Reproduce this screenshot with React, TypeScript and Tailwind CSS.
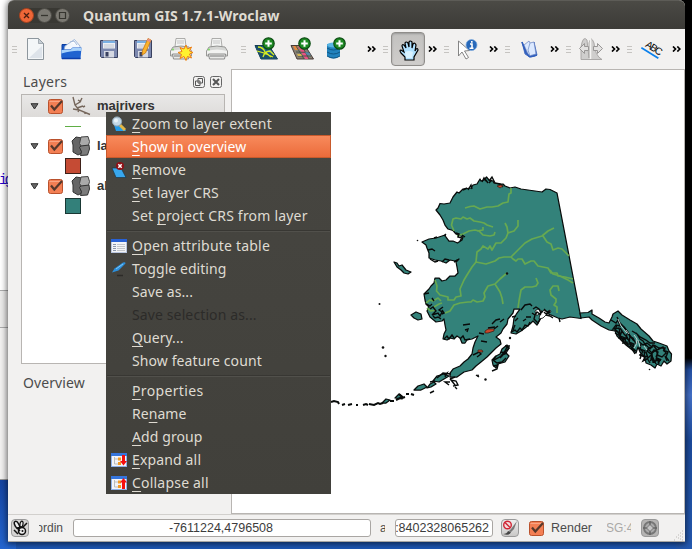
import type { ReactNode } from 'react';

const UI = "font-['Noto_Sans','Open_Sans',sans-serif]";
const SANS = "font-['Liberation_Sans',Arial,sans-serif]";

function Svg({ children, size = 24, className = '' }: { children: ReactNode; size?: number; className?: string }) {
  return (
    <svg viewBox={`0 0 ${size} ${size}`} width={size} height={size} className={`block shrink-0 ${className}`}>
      {children}
    </svg>
  );
}

function Handle({ className }: { className: string }) {
  return (
    <div className={`flex w-[5px] shrink-0 flex-col gap-[2px] ${className}`}>
      <i className="h-px bg-[#c6c4c1]" />
      <i className="h-px bg-[#c6c4c1]" />
      <i className="h-px bg-[#c6c4c1]" />
    </div>
  );
}

function More({ className }: { className: string }) {
  return (
    <svg viewBox="0 0 10 6" width="10" height="6" className={`block shrink-0 ${className}`}>
      <path d="M1 .5 3.5 3 1 5.5M5.3 .5 7.8 3 5.3 5.5" fill="none" stroke="#000" strokeWidth="1.7" />
    </svg>
  );
}

function Floppy() {
  return (
    <>
      <path d="M3.5 3.5h17v17h-16l-1-1z" fill="#7c88ae" stroke="#39405f" />
      <path d="M6 3.5h12v8H6z" fill="#eceef4" />
      <path d="M6 5h12" stroke="#5ea0e0" strokeWidth="1.6" />
      <path d="M7 8h10M7 10h10" stroke="#b9bdc9" strokeWidth=".8" />
      <path d="M7 14h10v6.5H7z" fill="#d5d8e2" />
      <path d="M8.500 15h3v4.500h-3z" fill="#39405f" />
    </>
  );
}

function Printer() {
  return (
    <>
      <path d="M7 1.500h9l1 8H6z" fill="#f3f4f3" stroke="#9a9a98" strokeWidth=".8" />
      <path d="M8 4h7M8 6h7" stroke="#c5c5c5" />
      <path d="M4 10q8-2 16 0l2.500 4v5h-21v-5z" fill="#d5d6d4" stroke="#858583" strokeWidth=".8" />
      <path d="M2 14q10-3 20 0v3H2z" fill="#f2f2f1" />
      <path d="M3.500 17h17l-1 5h-15z" fill="#e9e9e8" stroke="#777" strokeWidth=".8" />
      <path d="M5 19h14" stroke="#777" />
      <circle cx="4" cy="12.500" r="1" fill="#7fdc63" />
    </>
  );
}

function Plus() {
  return (
    <>
      <circle cx="14.500" cy="6.500" r="5.700" fill="#1f8a24" stroke="#0d4d14" strokeWidth="1.200" />
      <path d="M14.500 3.200v6.600M11.200 6.500h6.600" stroke="#fff" strokeWidth="2" />
    </>
  );
}

function Check() {
  return (
    <Svg size={17}>
      <rect x="1.500" y="1.500" width="14" height="14" rx="2" fill="#f37f54" stroke="#b9512c" />
      <path d="M2.500 3.500h12" stroke="#faa584" />
      <path d="M4 7.500 7.300 11.500 15 3" fill="none" stroke="#57382b" strokeWidth="2.200" />
    </Svg>
  );
}

function Toolbar() {
  return (
    <div className="flex h-10 shrink-0 items-center bg-[#f2f1f0]">
      <Handle className="ml-1" />
      <Svg className="ml-[7px]">
        <path d="M3.500 1.500h11l5 5v16h-16z" fill="#f3f6f8" stroke="#8d969d" />
        <path d="M14.500 1.500v5h5z" fill="#c6ced5" stroke="#8d969d" strokeWidth=".7" />
        <path d="M5 21h13V9z" fill="#dde3ea" />
      </Svg>
      <Svg className="ml-3">
        <path d="M2 7.500h5l1 1h11v12H2z" fill="#1a57c5" stroke="#0c3ea0" />
        <path d="M5 9 14.500 2.500 20 9v4H4z" fill="#f2f7fd" stroke="#8fa9d0" strokeWidth=".8" />
        <path d="m10 5 4-1 3 4" fill="#fff" stroke="#8fa9d0" strokeWidth=".8" />
        <path d="M1.500 12.500h9l2-2h9l-1 11.500h-19z" fill="#2063d0" />
        <path d="M1.500 13h9l2-2h9l-.3 3Q14 13 1.500 16.500z" fill="#a9d3fb" />
        <path d="M2 21.500h18.500" stroke="#0c3eab" strokeWidth="1.500" />
      </Svg>
      <Svg className="ml-[13px]"><Floppy /></Svg>
      <Svg className="ml-3">
        <g transform="translate(-2 0)"><Floppy /></g>
        <path d="m15 1.500 3 1.500-5.500 13-3.500 2 .5-4.500z" fill="#fbb32c" stroke="#c77a12" strokeWidth=".8" />
        <path d="m15 1.500 3 1.500-1 2.200-3.200-1.500z" fill="#e98f80" />
      </Svg>
      <Svg className="ml-3">
        <Printer />
        <path d="m17 8 1.500 4 4-2-2 4 3.500 1.500-3.500 1.500 2 4-4-1.500-1.500 4-2-4-4 2 1.500-4-3.500-2 4-1-2-4 4 1.500z" fill="#fff12e" stroke="#ee7c13" />
      </Svg>
      <Svg className="ml-3"><Printer /></Svg>
      <Handle className="ml-3" />
      <Svg className="ml-2">
        <path d="M1 8.500h14L23.500 22H7z" fill="#20639a" stroke="#173c54" />
        <path d="m1 9 6 13h16l-3-5q-9 1-12-8z" fill="#1b4f6b" />
        <path d="M4 10q5 0 7 5l6 5M9 20q2-6 7-6l4 4M3 14l7 2 9 4" fill="none" stroke="#d8ed22" strokeWidth="1.300" />
        <Plus />
      </Svg>
      <Svg className="ml-3">
        <path d="M1 8.500h14L23.500 22H7z" fill="#888073" stroke="#493b37" />
        <path d="M3 9h4l2 4H5z" fill="#e6893e" /><path d="m8 9h4l7 13h-4z" fill="#e95183" />
        <path d="m6 15 13 .500M8 19h13M6 9l8 13M12 9l7 13" stroke="#3e5148" strokeWidth=".9" />
        <path d="m15 15 4 .500 2 3-4-.500z" fill="#538aab" /><path d="m7 17h4l1 2H8z" fill="#d5b64f" />
        <Plus />
      </Svg>
      <Svg className="ml-[11px]">
        <path d="M2 7v12q6.500 5 13 0V7z" fill="#2182bd" />
        <path d="M2 11q6.500 4 13 0M2 15q6.500 4 13 0M2 19q6.500 4 13 0" fill="none" stroke="#0f5785" />
        <ellipse cx="8.500" cy="8" rx="6.500" ry="2.500" fill="#5ab5e3" />
        <Plus />
      </Svg>
      <More className="ml-[18px]" />
      <Handle className="ml-[6px]" />
      <div className="ml-[3px] flex size-[34px] shrink-0 items-center justify-center rounded-[4px] border border-[#8f8d8a] bg-gradient-to-b from-[#c2c1bf] to-[#cfcdcb] shadow-[inset_0_1px_2px_#999]">
        <Svg className="ml-[2px] mt-[3px]">
          <path d="M8 21v-3l-4-4q-2-3 0-3l3 2-2-6q0-2 2-1l2 3-1-5q1-2 3 0l1 4V3q1-2 3 0v6l1-4q2-2 3 1l-1 6 1-2q2-1 2 1l-4 7v3z" fill="#b0e1ff" stroke="#000" strokeWidth="1.200" />
          <path d="M8 13q4-2 8 0l-1 6H9z" fill="#d9f2ff" />
        </Svg>
      </div>
      <More className="ml-[3px]" />
      <Handle className="ml-[6px]" />
      <Svg className="ml-[7px]">
        <path d="M2.500 4v15l3.500-4 4 7 2.500-1.500-4-6.500 5-.500z" fill="#fff" stroke="#777" strokeWidth=".9" />
        <circle cx="15.500" cy="8" r="5.500" fill="#2869ba" stroke="#7ba9dd" strokeWidth=".7" />
        <path d="M14 7h2v4M13.500 11.300h4M15.800 4v1.800" fill="none" stroke="#fff" strokeWidth="1.600" />
      </Svg>
      <More className="ml-[9px]" />
      <Handle className="ml-[6px]" />
      <Svg className="ml-2">
        <path d="m4 5 3 12q6 5 12 1L16 5l1 11-6 4z" fill="#6e91d8" stroke="#345eb5" strokeWidth=".8" />
        <path d="m6 8 5-4 1 2 4-1 2 12-7 2z" fill="#dce9ff" stroke="#6480c0" strokeWidth=".7" />
        <path d="m12 6-2 7 2 6" fill="none" stroke="#8ba5d5" /><path d="m4 5 4 11 4 4 7-2" fill="none" stroke="#315fbd" strokeWidth="1.500" />
      </Svg>
      <More className="ml-2" />
      <Handle className="ml-[6px]" />
      <Svg className="ml-2">
        <path d="M2 22.500V10Q4-2 8 3l2 18V6q2-8 5 0 1 13 8 16.500z" fill="#cfcecd" stroke="#a5a3a2" strokeWidth=".9" />
        <path d="m.5 11.500 5-5v3h4v4h-4v3zm23 0-5-5v3h-4v4h4v3z" fill="#e3e2e1" stroke="#999796" />
        <path d="M11.500 2v20" stroke="#f5f4f3" strokeWidth="1.500" />
      </Svg>
      <More className="ml-2" />
      <Handle className="ml-[6px]" />
      <Svg className="ml-[9px]">
        <g transform="rotate(32 2 10)">
          <text x="3" y="8.500" fontFamily="Liberation Sans" fontSize="10" fill="#000" textLength="18">ABC</text>
          <path d="M1 11.500h20" stroke="#0b80ec" strokeWidth="1.800" />
        </g>
      </Svg>
      <More className="ml-[7px]" />
    </div>
  );
}

function Polygons() {
  return (
    <Svg size={20}>
      <path d="m1 5 4-4 6 1 1 5-3 4 2 6-4 2-5-3V9z" fill="#666" stroke="#333" />
      <path d="m10 1 7-.500 1.500 5-1 4-7 1-2-3z" fill="#aaa" stroke="#444" />
      <path d="m10 10 8-1 .500 4-2 6-7 .500 1-4-2-4z" fill="#7c7c7c" stroke="#333" />
    </Svg>
  );
}

function LayerRow({ name, icon, className = '' }: { name: string; icon: ReactNode; className?: string }) {
  return (
    <div className={`flex items-center pl-[8px] ${className}`}>
      <svg width="9" height="7" viewBox="0 0 9 7" className="mr-[8px] block"><path d="M1 .700h7L4.500 6z" fill="#666" stroke="#333" /></svg>
      <Check />
      <span className="ml-[7px] mr-[6px]">{icon}</span>
      <span className="text-[13px] font-bold leading-5 text-[#333]">{name}</span>
    </div>
  );
}

function LayersDock() {
  return (
    <div className="flex w-[223px] shrink-0 flex-col">
      <div className="flex h-[25px] items-center pl-[15px] pr-[9px]">
        <span className={`flex-1 text-[14px] tracking-[.25px] text-[#4c4c4c] ${UI}`}>Layers</span>
        <Svg size={12} className="mr-[5px]">
          <rect x=".5" y=".5" width="11" height="11" rx="2" fill="none" stroke="#666" />
          <path d="M5 2.500h4.500V7H5zM2.500 5H7v4.500H2.500z" fill="#f2f1f0" stroke="#555" />
        </Svg>
        <Svg size={12}>
          <rect x=".5" y=".5" width="11" height="11" rx="2" fill="none" stroke="#666" />
          <path d="m3 3 6 6M9 3 3 9" stroke="#555" strokeWidth="2" />
        </Svg>
      </div>
      <div className={`ml-[13px] flex h-[270px] w-[204px] flex-col border border-[#b8b5b2] bg-white ${SANS}`}>
        <LayerRow
          name="majrivers"
          className="h-[22px] bg-gradient-to-b from-[#e9e8e7] to-[#dddbd9]"
          icon={
            <Svg size={20}>
              <path d="m2 1 2 8 4 5 11 4.500M2 13l6 1M4 9l5-3 2-4M6 12l6-2M8 14l-1 2M10 6l-3-2M12 11l2-1M14 16v2" fill="none" stroke="#75665b" strokeWidth="1.400" />
            </Svg>
          }
        />
        <div className="flex h-[18px] pl-[43px] pt-[9px]"><i className="h-px w-4 bg-[#5fae45]" /></div>
        <LayerRow name="lakes" className="h-[22px]" icon={<Polygons />} />
        <div className="flex h-[18px] pl-[43px] pt-px"><i className="size-4 border border-[#3e2119] bg-[#c54b34]" /></div>
        <LayerRow name="alaska" className="h-[22px]" icon={<Polygons />} />
        <div className="flex h-[18px] pl-[43px] pt-px"><i className="size-4 border border-[#193834] bg-[#33807a]" /></div>
      </div>
      <div className={`mt-[9px] pl-[15px] text-[14px] leading-5 tracking-[.1px] text-[#4c4c4c] ${UI}`}>Overview</div>
    </div>
  );
}

const MAINLAND =
  'M486.500 177L484 180 481 181 480 179 477 184 473 185 471 188 463 189 459 193 457 192 453 197 450 203 444 204 440 203.500 438 208 436 210 440 215 443 220 445 225 448 229 453 230.500 456 234 463 237 462 240 457.500 243 453 241 449 241 446 237 445 235 436 238 429 239 422 242 426 245 427 248 429 253 429 258 435 260 441 261 446 263 450 260 455 261 459 259 456 262 457 267 458 273 455 276 450 276 446 280 442 281 439 278 435 278 434 283 431 286 429 289 424 294 425 300 426 304 429 307 427 311 430 317 436 322 442 321 444 319 445 325 446 330 444 334 443 339 447 340 450 338 454 339 457 336 460 338 462 343 465 343 467 340 472 339 478 336 475 342 473 348 472 354 468 359 464 362 460 366 453 369 450 373 450 377 457 377 464 372 472 370 476 366 481 362 487 357 496 348 501 344 500 340 496 337 501 333 503 329 507 324 508 319 513 313 514 309 520 309 517 313 514 318 513 326 511 333 516 334 521 331 525 328 530 324 533 321 537 325 541 318 546 313 551 315 558 318 562 319 570 317 581 318.500 580 313 557 193 550 189.500 546 189 542 192 535 191 528 190 521 189 515 187 510 188 505 186 503 184 499 184 494 183 493 181 489 180z';

const PANHANDLE =
  'M580 313L588 312.500 592 310 592 314 599 318 605 322 609 323 612 317 613 314 618 311 622 315 630 320 637 324 641 329 649 336 653 341 659 343 667 346 669 351 671.500 354 671 361 667 364 664 361 661 366 657 364 655 368 651 365 646 363 645 358 640 352 638 347 636 353 631 349 626 345 621 340 617 336 615 331 609 330 601 326 592 320 589 317 581 318z';

const RIVERS = [
  'M465 208L470 206.500 474 206 480 209 487 207 492 207 498 206 503 203 508 202 509 194 511 193 511 188',
  'M454 231L451.500 225 453 219 456 218 461 219 463 217 467 219 470 218 474 221 480 222 484 223 487 225 493 227',
  'M457 236L463 234 469 231 475 230 479 231 483 235 490 236 494 235 495 232M477 231L483 230 483 227',
  'M435 280L437 286 436.500 291 440 295 448 297 448 300 454 300 456 297 461 296 460 289 464 280 467 275 472 267 476 262 486 264 495 261 499 258 504 257 511 257 516 252 519 249 525 243 532 239 542 236 548 231 554 228M543 236L547 242 551 244 553 250 558 248 562 249 566 253 569 256',
  'M476 262L477 252 481 249 483 246 488 249 490 246 492 250 496 243 501 243 506 238 508 233 514 231 518 226 518 220M508 233L507 227 505 223',
  'M511 257L513 259 516 261 518 259 522 259 525 264 531 261 534 261 538 266 543 267 548 268 551 273 557 273 558 276 565 277 573 279',
  'M445 313L450 311 454 305 460 303 468 302 471 302 473 300 477 302 483 301 485 297 484 293 488 286 495 284 500 279 507 273M495 284L500 292 502 298 503 304',
  'M518 308L519 301 521 290 525 287 532 287 536 286 538 283 536 278',
  'M426 303L430 300 433 301 438 298 441 301',
  'M559 291L558 286 553 286 550 290 551 295 556 299 556 302 554 305 557 307 557 313',
  'M550 270L553 274 560 276 564 278 568 280 573 283',
  'M434 307L439 304 442 303M427 308L431 311 436 310',
];

// Channel, fjord and islet shorelines, grouped by stretch of coast.
const SHORES = [
  'M426 304l4 2 2-2M430 309l3-2 3 4-4 4 6-2 2 3 2-4-3-2 4-3M433 316l2 2 3-1 3 2M442 310l2 3-2 1M432 298l2 3M424 294l5-1',
  'M428 250l4-1 3 2M430 259l5 3 3-1M442 262l3-3 4 1M454 262l4-2M456 233l3 1-1 3 4 1-2 3M462 235l3 2M434 238l3-1M444 236l2-2',
  'M463 190l4-2M468 190l3-5 1 4M482 182l2-4 2 3M485 179l3 4M489 181l3-4 3 6 5 1 3 3M489 183l3-3',
  'M463 325l7-1M465 330l3-1-1 3M492 324l4-4 4-1M481 341l6 1M494 329l4-3M473 355l6-3 2 2-4 3',
  'M444 339l3-3 2 3 3-4 2 3M460 339l3-3 2 4 5-1M484 334l-5-1M488 328l7-1M500 322l4-3',
  'M511 332l4-2 2 2 3-4 2 2 3-5 3 1 2-4M512 317l4-1M515 321l3-3M523 321l3-2M526 317l5 0M513 330l2-5',
  'M521 310l4-5 5-1 2 2M533 309l3-2 3 2 2 4M532 313l3 2 2-3 4 3M535 315l-1 4 4 4 2-4M544 309l3 3 3-1M544 312l2 2 4-2M546 315l4 1 3 2M559 318l1 4M537 312l3 2 3-3',
  'M494 360l4-2 3-2 4-5 2-4 2 1-3 5M493 366l5-1-1 4-5 2M502 355l5-2M501 352l4 1-5 5M496 356l-3 4 4 3 5-1 4-4M505 346l5 0',
  'M450 379l5-2M455 385l-4-5 5 1 2 4-5 1M449 385l-4-3 5 0M457 389l-2-2M444 375l3-2-2 4M430 393l4-2M476 375l3 2M430 382l5-1M437 378l6-5 8 1',
  'M611 320l5 3 2-3 2 6-4-1-3 4 6-1 1 5-5-3M617 317l3 6 4 4 4 6 6 8',
  'M616 330l4 5-1 3 5 1-1 4 4-1 1 4 4 1 2 4M620 328l4 6 3 3 3 6 4 4M624 327l4 5 2 5 3 1 3 6M615 333l5 3 3 5 5 3M617 325l-2 5 5 4M622 331l-2 5 5 2 1 6 4 0 2 5M627 334l-1 4 4 3M630 337l-1 5 5 2-2 4 4 3',
  'M632 331l5 3 3 5 3 2 3 5M639 348l4 4-3 3 5 2-2 4 4-2M638 341l5 4 4-2 5 4-4 2 4 4 4-3 2 5M636 333l4 4 6 3 4 3 5 0',
  'M645 344l5 5 3-4 4 5 6-3 3 6-4 4-5-2-1 5 5 0M646 352l2 6 4-4 1 8 5-2 1 4M650 361l3-3 3 6M663 350l5 2-2 5 3 4M654 345l5 3 6 0-1 4M650 347l-3 4 4 3 3-4 4 2-2 5M641 344l-1 5 5 2-1 5 4 1M652 354l-1 5 4 3 2-4 4 2',
  'M640 359l1-3M635 354l-3-5 3 1M641 357l-1-3M658 363l3-4M665 356l2 5M647 358l3 5',
];

const INLETS = [
  'M540 314l4-4 3 2 3-2 1 2-4 2-4 4-4 1z',
  'M535 311l3-2 4 2-4 4-2 0z',
];

function AlaskaMap() {
  return (
    <svg viewBox="232 70 452 444" width="452" height="444" className="block">
      <g stroke="#080b0a" strokeWidth="1.250" strokeLinejoin="round" fill="#33827a">
        <path d={MAINLAND} />
        <path d={PANHANDLE} />
        <path d="M411 315L416 312 421 314 422 319 418 320 414 318z" />
        <path d="M394 262L397 263 399 266 402 265 406 270 411 272 408 274 404 273 401 270 397 267z" />
        <path d="M492 360L496 356 500 354 502 349 507 345 509 348 505 352 509 356 505 362 498 364 496 368 493 365z" />
        <path d="M433 381L437 376 444 374 449 376 444 379 439 382z" />
        <path d="M414 390L418 386 424 384 427 387 421 390z" />
        <path d="M427 388L430 384 434 382 436 384 431 387z" />
        <path d="M395 398L399 394 402 396 402 399zM382 403L386 399 390 400 386 403z" />
      </g>
      <g fill="none" stroke="#67a951" strokeWidth="1.700" strokeLinejoin="round">
        {RIVERS.map((d) => <path key={d} d={d} />)}
      </g>
      <g fill="#fff" stroke="#080b0a" strokeWidth=".8">
        {INLETS.map((d) => <path key={d} d={d} />)}
      </g>
      <g fill="none" stroke="#080b0a" strokeWidth="1.400">
        {SHORES.map((d) => <path key={d} d={d} />)}
        <path d="M402 398l3-1M406 394l3 0M411 394l3 1M390 401l4 0M396 400l6-3M399 394l4 4M363 405l3-1 2 1M369 404l5 1 4-2 2 1 3-1M356 405l2 0M348 405l4-1M342 405l3-1M331 402l3-1 4 1 1 2" strokeWidth="2" />
      </g>
      <path d="M618 319l3 7 6 7M634 335l3 4-1 6-2 3M638 340l2 7M644 346l3 4M626 330l3 4" fill="none" stroke="#dfe8e7" strokeWidth=".8" />
      <g fill="#c8472b" stroke="#351a12" strokeWidth=".7">
        <path d="M485 331l3-2 6 0 0 2-6 2-3 0z" /><path d="M478 350l4 0 1 2-5 0z" /><path d="M497 186l4-1 2 1-3 2z" />
      </g>
      <g fill="#111">
        <circle cx="507" cy="273.500" r="1.200" /><circle cx="379.500" cy="304" r="1" /><circle cx="383" cy="347.500" r="1.300" />
        <circle cx="385.500" cy="356" r="1.200" /><circle cx="417.500" cy="240.500" r=".8" /><circle cx="478" cy="375.500" r="1" /><circle cx="485.500" cy="379.500" r="1.200" />
        <circle cx="649.500" cy="369.500" r=".8" /><circle cx="510" cy="338" r="1.200" />
      </g>
    </svg>
  );
}

function StatusBar() {
  return (
    <div className={`flex h-[27px] shrink-0 items-center border-t border-[#d2d0cd] bg-[#f2f1f0] text-[12px] text-[#4c4c4c] ${SANS}`}>
      <div className="ml-[3px] flex size-[18px] shrink-0 items-center justify-center rounded-[4px] border border-[#999] bg-[#d5d4d3]">
        <Svg size={16}>
          <ellipse cx="5" cy="5" rx="2" ry="4" transform="rotate(-30 5 5)" fill="#eee" stroke="#111" strokeWidth="1.500" />
          <ellipse cx="9.500" cy="4" rx="1.500" ry="3" transform="rotate(10 9 4)" fill="#eee" stroke="#111" strokeWidth="1.200" />
          <circle cx="10" cy="11" r="3.500" fill="#eee" stroke="#111" strokeWidth="1.500" />
          <path d="m5 8 6-1 4-4M2 10l4 4M6 9l2 2" fill="none" stroke="#111" strokeWidth="1.500" />
          <circle cx="10.500" cy="11" r="1" fill="#111" />
        </Svg>
      </div>
      <div className="ml-[10px] flex w-[24px] justify-end overflow-hidden text-[12px]"><span>ordin</span></div>
      <div className="ml-[10px] flex h-[18px] w-[298px] shrink-0 items-center justify-center rounded-[3px] border border-[#a9a6a3] bg-white pr-[2px] text-[12.500px] text-[#3c3c3c]">
        -7611224,4796508
      </div>
      <span className="ml-[9px] w-[5px] overflow-hidden">a</span>
      <div className="ml-[10px] flex h-[18px] w-[98px] shrink-0 items-center justify-end overflow-hidden rounded-[3px] border border-[#a9a6a3] bg-white pr-[3px] text-[12.500px] text-[#3c3c3c]">
        <span>:8402328065262</span>
      </div>
      <div className="ml-[8px] flex size-[18px] shrink-0 items-center justify-center rounded-[4px] border border-[#999] bg-gradient-to-b from-[#eee] to-[#c9c8c7]">
        <Svg size={16}>
          <path d="m15 1-6 8-2 2 2 1 3-3z" fill="#777" />
          <path d="M1 14q4 0 5-3l3 1q-1 4-8 2z" fill="#444" />
          <circle cx="5.500" cy="5" r="3.800" fill="#f5dada" stroke="#cf2535" strokeWidth="1.400" /><path d="m3 2.500 5 5" stroke="#cf2535" strokeWidth="1.400" />
        </Svg>
      </div>
      <span className="ml-[9px]"><Check /></span>
      <span className="ml-[6px] w-[42px] text-[12.500px]">Render</span>
      <div className="ml-[14px] flex w-[24px] justify-center overflow-hidden text-[#aaa9a7]"><span>PSG:43</span></div>
      <div className="ml-[10px] flex size-[18px] shrink-0 items-center justify-center rounded-[4px] border border-[#999] bg-[#b5b4b3]">
        <Svg size={16}>
          <circle cx="8" cy="8" r="6" fill="#aaa" stroke="#777" strokeWidth="1.800" />
          <path d="M8 1v14M1 8h14" stroke="#666" strokeWidth="1.600" />
          <path d="M8 4.500 11.500 8 8 11.500 4.500 8z" fill="#c5c5c5" stroke="#777" />
        </Svg>
      </div>
      <svg width="11" height="11" viewBox="0 0 11 11" className="ml-auto mr-[1px] mt-[14px] block">
        <path d="M9 1h1M7 3h1M9 4h1M5 5h1M7 6h1M9 7h1M3 7h1M5 8h1M7 9h1M9 10h1M1 10h1" stroke="#bbb8b5" />
      </svg>
    </div>
  );
}

const TableIcon = () => (
  <Svg size={16}>
    <rect x=".5" y="1.500" width="15" height="13" fill="#f3f4f6" stroke="#b9c6df" /><path d="M0 1h16v3H0z" fill="#2861d5" />
    <path d="M2 6.500h3M2 8.500h3M2 10.500h3M2 12.500h3" stroke="#8b97ad" /><path d="M6 6.500h8M6 8.500h8M6 10.500h8M6 12.500h8" stroke="#c3c6ca" />
  </Svg>
);

const TreeIcon = ({ up = false }: { up?: boolean }) => (
  <Svg size={16}>
    <rect x=".5" y="1.500" width="15" height="13" fill="#f3f4f8" stroke="#8fb1e8" /><path d="M0 1h16v3H0z" fill="#3575dc" />
    <path d="M3.500 5v7H7M3.500 7H7" fill="none" stroke="#bbb" /><path d="M7 5.500h3v3H7zM7 10h3v3H7z" fill="#f59a22" />
    {up ? <path d="M12.500 3 9 7.500h2V14h3V7.500h2z" fill="#f40f0f" /> : <path d="M12.500 13.500 9 9h2V3h3v6h2z" fill="#f40f0f" />}
  </Svg>
);

const ZoomIcon = () => (
  <Svg size={16}>
    <path d="m3 9 9 1 3 5H5z" fill="#239ceb" />
    <path d="m9 9 5 5" stroke="#e3b645" strokeWidth="3" /><circle cx="6" cy="5.500" r="4.600" fill="#c3d8e8" stroke="#8fa4b4" /><circle cx="5" cy="4.500" r="2" fill="#e9f3fa" />
  </Svg>
);

const RemoveIcon = () => (
  <Svg size={16}>
    <path d="M1 6h9l5 9.500H5z" fill="#38a7ee" stroke="#1b3648" strokeWidth=".7" />
    <circle cx="9" cy="4" r="4" fill="#8f1015" /><path d="m7.300 2.300 3.400 3.400M10.700 2.300 7.300 5.700" stroke="#fff" strokeWidth="1.500" />
  </Svg>
);

const PenIcon = () => (
  <Svg size={16}>
    <path d="M6 14.500h6" stroke="#2c2b28" strokeWidth="1.500" />
    <path d="M1 11.500 3.500 7.500 12 1.500q2.500-1 2.500 1L7.500 9.500z" fill="#2c8fdc" /><path d="m5 8 7-5" stroke="#7fc7f5" />
  </Svg>
);

type Item = { before?: string; key?: string; after: string; icon?: ReactNode; hot?: boolean; off?: boolean; fit: string };

const GROUPS: Item[][] = [
  [
    { key: 'Z', after: 'oom to layer extent', icon: <ZoomIcon />, fit: 'tracking-[.17px]' },
    { key: 'S', after: 'how in overview', hot: true, fit: 'tracking-[.05px]' },
    { key: 'R', after: 'emove', icon: <RemoveIcon />, fit: 'tracking-[.2px]' },
    { key: 'S', after: 'et layer CRS', fit: 'tracking-[.1px]' },
    { before: 'Set ', key: 'p', after: 'roject CRS from layer', fit: 'tracking-[.2px]' },
  ],
  [
    { key: 'O', after: 'pen attribute table', icon: <TableIcon />, fit: 'tracking-[.2px]' },
    { after: 'Toggle editing', icon: <PenIcon />, fit: 'tracking-[.05px]' },
    { after: 'Save as...', fit: 'tracking-[.1px]' },
    { after: 'Save selection as...', off: true, fit: 'tracking-[.12px]' },
    { key: 'Q', after: 'uery...', fit: 'tracking-[.05px]' },
    { after: 'Show feature count', fit: 'tracking-[.1px]' },
  ],
  [
    { key: 'P', after: 'roperties', fit: 'tracking-[.35px]' },
    { before: 'Re', key: 'n', after: 'ame', fit: 'tracking-[.05px]' },
    { key: 'A', after: 'dd group', fit: 'tracking-[.1px]' },
    { key: 'E', after: 'xpand all', icon: <TreeIcon />, fit: 'tracking-[.15px]' },
    { key: 'C', after: 'ollapse all', icon: <TreeIcon up />, fit: 'tracking-[.2px]' },
  ],
];

function ContextMenu() {
  return (
    <div className={`absolute left-[106px] top-[112px] w-[225px] bg-gradient-to-b from-[#474641] to-[#41403b] text-[14px] leading-[22px] ${UI}`}>
      {GROUPS.map((group, g) => (
        <div key={g}>
          {g > 0 && <div className="flex h-[7px] items-center px-px"><i className="h-[2px] w-full border-t border-[#383733] bg-[#51504b]" /></div>}
          {group.map((item) => (
            <div
              key={(item.before ?? '') + (item.key ?? '') + item.after}
              className={`flex h-[23px] items-center ${
                item.hot
                  ? 'border border-[#c85a2c] bg-gradient-to-b from-[#f88a5b] to-[#eb6b3a] pl-[3px] text-white'
                  : item.off
                    ? 'pl-1 text-[#2c2b29]'
                    : 'pl-1 text-[#dfdbd2]'
              }`}
            >
              <span className="mr-[5px] w-[17px] pl-px">{item.icon}</span>
              <span className={`whitespace-pre ${item.fit}`}>
                {item.before}
                {item.key && <span className="underline decoration-1 underline-offset-[3px] [text-decoration-skip-ink:none]">{item.key}</span>}
                {item.after}
              </span>
            </div>
          ))}
        </div>
      ))}
    </div>
  );
}

function TitleBar() {
  return (
    <div className="flex h-[29px] shrink-0 items-center rounded-t-[6px] border-t border-[#5d5c57] bg-gradient-to-b from-[#4b4a45] to-[#3c3b37] pl-[11px]">
      <div className="flex gap-[3px] rounded-full bg-[#393833]">
        <Svg size={15}><circle cx="7.500" cy="7.500" r="7" fill="#ef6637" stroke="#a44321" /><path d="m5 5 5 5M10 5l-5 5" stroke="#4a1e10" strokeWidth="1.300" /></Svg>
        <Svg size={15}><circle cx="7.500" cy="7.500" r="7" fill="#7b7972" stroke="#4b4a45" /><path d="M4 7.500h7" stroke="#36352f" strokeWidth="1.300" /></Svg>
        <Svg size={15}><circle cx="7.500" cy="7.500" r="7" fill="#7b7972" stroke="#4b4a45" /><path d="M4.500 4.500h6v6h-6z" fill="none" stroke="#36352f" strokeWidth="1.200" /></Svg>
      </div>
      <span className={`ml-[13px] whitespace-nowrap text-[14px] font-bold tracking-[.13px] text-[#dfdbd2] ${UI}`}>Quantum GIS 1.7.1-Wroclaw</span>
    </div>
  );
}

export default function App() {
  return (
    <div className="relative h-[549px] w-[692px] overflow-hidden bg-gradient-to-b from-[#1b55b8] to-[#1e58b5]">
      <div className="absolute left-0 top-0 flex h-[549px] w-[16px] flex-col">
        <div className="h-[290px] bg-white pt-[171px] font-['Liberation_Mono',monospace] text-[14px] leading-[18px] tracking-[-3px] text-[#2300ca] [text-indent:-1px]">ig</div>
        <div className="h-[38px] border-y border-[#aaa] bg-[#ebeae9]" />
        <div className="h-[152px] border-b border-[#999] bg-[#f2f1f0]" />
        <div className="h-[69px] bg-gradient-to-b from-[#1644a0] to-[#2365d0]" />
      </div>
      <div className="absolute right-0 top-0 h-[549px] w-[16px] bg-[linear-gradient(#000_0,#000_358px,#2450a4_370px,#4471c9_395px,#1c4b9d_440px,#2459b0_549px)]" />
      <div className="relative ml-[8px] flex h-[542px] w-[677px] flex-col rounded-t-[6px] border-b border-[#aaa7a2] bg-[#f2f1f0] shadow-[0_1px_6px_1px_rgba(0,0,0,.6)]">
        <TitleBar />
        <Toolbar />
        <div className="flex min-h-0 flex-1">
          <LayersDock />
          <div className="w-[454px] shrink-0 overflow-hidden border border-[#b8b5b2] bg-white">
            <AlaskaMap />
          </div>
        </div>
        <StatusBar />
      </div>
      <ContextMenu />
    </div>
  );
}
